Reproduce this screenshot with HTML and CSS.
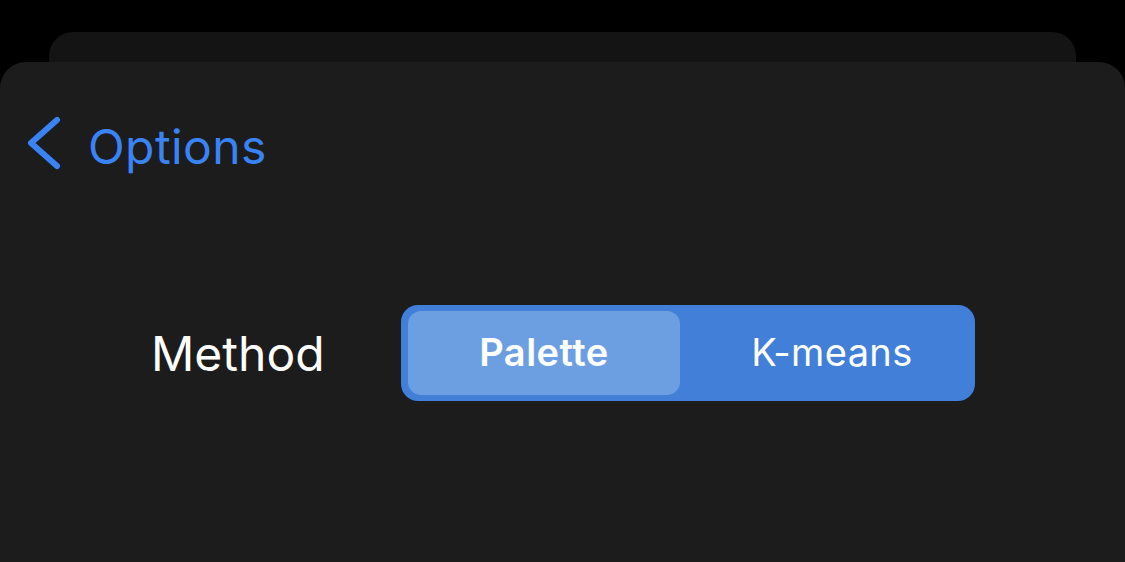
FILE: index.html
```html
<!DOCTYPE html>
<html>
<head>
<meta charset="utf-8">
<link rel="stylesheet" href="styles.css">
</head>
<body>
<div class="stack">
  <div class="back-sheet"></div>
  <div class="sheet">
    <div class="nav">
      <svg class="chev" width="40" height="60" viewBox="0 0 40 60">
        <path d="M31 4 L5 27 L31 50" fill="none" stroke="#3a83f5" stroke-width="6" stroke-linecap="round" stroke-linejoin="round"/>
      </svg>
      <span class="nav-title">Options</span>
    </div>
    <div class="row">
      <span class="label">Method</span>
      <div class="seg">
        <div class="seg-item active">Palette</div>
        <div class="seg-item">K-means</div>
      </div>
    </div>
  </div>
</div>
</body>
</html>
```
FILE: styles.css
```css
html, body {
  margin: 0;
  padding: 0;
  background: #000;
  height: 100%;
  overflow: hidden;
}
.stack {
  padding-top: 32px;
  font-family: Inter, "Noto Sans", sans-serif;
}
.back-sheet {
  height: 30px;
  margin: 0 49px;
  background: #141414;
  border-radius: 24px 24px 0 0;
}
.sheet {
  height: 500px;
  background: #1c1c1c;
  border-radius: 26px 26px 0 0;
}
.nav {
  display: flex;
  align-items: center;
  padding: 54px 0 0 26px;
  height: 60px;
}
.chev {
  display: block;
}
.nav-title {
  color: #3a83f5;
  font-size: 48px;
  margin-left: 22px;
  letter-spacing: 0.4px;
}
.row {
  display: flex;
  align-items: center;
  margin-top: 129px;
  padding-left: 151px;
}
.label {
  color: #fff;
  font-size: 48px;
  width: 250px;
}
.seg {
  display: flex;
  width: 574px;
  height: 96px;
  box-sizing: border-box;
  padding: 6px 7px;
  background: #417fd9;
  border-radius: 17px;
}
.seg-item {
  flex: 1;
  display: flex;
  align-items: center;
  justify-content: center;
  color: #fff;
  font-size: 38px;
  font-weight: 400;
  letter-spacing: 0.4px;
  border-radius: 13px;
  padding-bottom: 2px;
  padding-left: 16px;
}
.seg-item.active {
  flex: 0 0 272px;
  padding-left: 0;
  background: #6c9fe2;
  font-weight: 600;
  letter-spacing: 0.5px;
}
```
